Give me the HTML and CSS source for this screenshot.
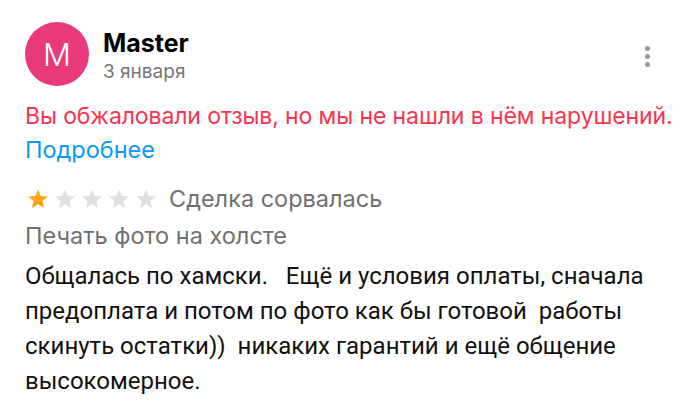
FILE: index.html
```html
<!DOCTYPE html>
<html lang="ru">
<head>
<meta charset="utf-8">
<link rel="stylesheet" href="styles.css">
</head>
<body>
<div class="review">
  <div class="head">
    <div class="avatar">M</div>
    <div class="who">
      <div class="name">Master</div>
      <div class="date">3 января</div>
    </div>
    <div class="kebab"><span></span><span></span><span></span></div>
  </div>
  <div class="notice">Вы обжаловали отзыв, но мы не нашли в нём нарушений.</div>
  <div class="more">Подробнее</div>
  <div class="rating">
    <div class="stars">
      <svg class="star on" viewBox="0 0 24 24"><path d="M12 1.5l3.1 7.1 7.6.6-5.8 5 1.8 7.5L12 17.7l-6.7 4 1.8-7.5-5.8-5 7.6-.6z"/></svg>
      <svg class="star" viewBox="0 0 24 24"><path d="M12 1.5l3.1 7.1 7.6.6-5.8 5 1.8 7.5L12 17.7l-6.7 4 1.8-7.5-5.8-5 7.6-.6z"/></svg>
      <svg class="star" viewBox="0 0 24 24"><path d="M12 1.5l3.1 7.1 7.6.6-5.8 5 1.8 7.5L12 17.7l-6.7 4 1.8-7.5-5.8-5 7.6-.6z"/></svg>
      <svg class="star" viewBox="0 0 24 24"><path d="M12 1.5l3.1 7.1 7.6.6-5.8 5 1.8 7.5L12 17.7l-6.7 4 1.8-7.5-5.8-5 7.6-.6z"/></svg>
      <svg class="star" viewBox="0 0 24 24"><path d="M12 1.5l3.1 7.1 7.6.6-5.8 5 1.8 7.5L12 17.7l-6.7 4 1.8-7.5-5.8-5 7.6-.6z"/></svg>
    </div>
    <span class="status">Сделка сорвалась</span>
  </div>
  <div class="service">Печать фото на холсте</div>
  <p class="text">Общалась по хамски.&nbsp;&nbsp; Ещё и условия оплаты, сначала<br>предоплата и потом по фото как бы готовой&nbsp; работы<br>скинуть остатки))&nbsp; никаких гарантий и ещё общение<br>высокомерное.</p>
</div>
</body>
</html>
```
FILE: styles.css
```css
html, body {
  margin: 0;
  padding: 0;
  background: #fff;
}
body {
  font-family: Inter, Roboto, "Noto Sans", sans-serif;
  width: 700px;
  height: 404px;
  overflow: hidden;
}
.review {
  padding: 22px 25px 0 25px;
}
.head {
  display: flex;
  align-items: flex-start;
  height: 64px;
}
.avatar {
  width: 64px;
  height: 64px;
  border-radius: 50%;
  background: #e8397a;
  color: #fff;
  font-family: Inter, Roboto, sans-serif;
  font-weight: 300;
  font-size: 31px;
  display: flex;
  align-items: center;
  justify-content: center;
  flex: none;
}
.who {
  margin-left: 14px;
  display: flex;
  flex-direction: column;
}
.name {
  font-weight: 700;
  font-size: 25px;
  line-height: 34px;
  margin-top: 4px;
  color: #000;
}
.date {
  font-size: 19px;
  line-height: 24px;
  color: #757575;
}
.kebab {
  margin-left: auto;
  margin-right: 25px;
  margin-top: 24px;
  display: flex;
  flex-direction: column;
  gap: 3px;
}
.kebab span {
  width: 5px;
  height: 5px;
  border-radius: 50%;
  background: #9a9a9a;
}
.notice {
  margin-top: 13px;
  font-size: 23px;
  letter-spacing: -0.1px;
  line-height: 34px;
  color: #f8344f;
  white-space: nowrap;
}
.more {
  font-size: 23.5px;
  line-height: 34px;
  color: #0a99f6;
}
.rating {
  margin-top: 15px;
  display: flex;
  align-items: center;
  height: 34px;
}
.stars {
  display: flex;
  gap: 5px;
  margin-left: 2px;
}
.star {
  width: 22px;
  height: 22px;
  fill: #e0e0e0;
}
.star.on {
  fill: #ffa51d;
}
.status {
  margin-left: 12px;
  font-size: 23.5px;
  line-height: 34px;
  color: #707070;
}
.service {
  margin-top: 3px;
  font-size: 23.5px;
  line-height: 34px;
  color: #707070;
}
.text {
  margin: 6px 0 0 0;
  font-family: Roboto, "Noto Sans", sans-serif;
  font-size: 24px;
  line-height: 35px;
  color: #111;
  white-space: nowrap;
}
```
